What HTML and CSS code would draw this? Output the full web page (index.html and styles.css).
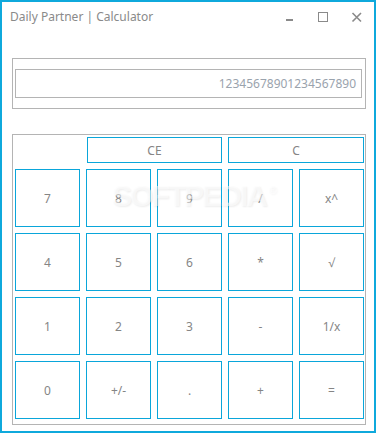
FILE: index.html
```html
<!DOCTYPE html>
<html>
<head>
<meta charset="utf-8">
<link rel="stylesheet" href="styles.css">
</head>
<body>
<div class="window">
  <div class="titlebar">
    <span class="title">Daily Partner | Calculator</span>
    <div class="controls">
      <svg class="ctl" width="12" height="12" viewBox="0 0 12 12"><rect x="3" y="8" width="7" height="2" fill="#8a8a8a"/></svg>
      <svg class="ctl" width="12" height="12" viewBox="0 0 12 12"><rect x="1.5" y="1.5" width="9" height="9" fill="none" stroke="#8a8a8a" stroke-width="1"/></svg>
      <svg class="ctl" width="12" height="12" viewBox="0 0 12 12"><path d="M1.5 2 L10 10.5 M10 2 L1.5 10.5" stroke="#8a8a8a" stroke-width="1.6"/></svg>
    </div>
  </div>
  <div class="display-group">
    <div class="display">12345678901234567890</div>
  </div>
  <div class="keypad">
    <button class="key wide ce">CE</button>
    <button class="key wide">C</button>
    <button class="key">7</button>
    <button class="key">8</button>
    <button class="key">9</button>
    <button class="key">/</button>
    <button class="key">x^</button>
    <button class="key">4</button>
    <button class="key">5</button>
    <button class="key">6</button>
    <button class="key">*</button>
    <button class="key">√</button>
    <button class="key">1</button>
    <button class="key">2</button>
    <button class="key">3</button>
    <button class="key">-</button>
    <button class="key">1/x</button>
    <button class="key">0</button>
    <button class="key">+/-</button>
    <button class="key">.</button>
    <button class="key">+</button>
    <button class="key">=</button>
    <div class="watermark">SOFTPEDIA<sup>®</sup></div>
  </div>
</div>
</body>
</html>
```
FILE: styles.css
```css
html, body {
  margin: 0;
  padding: 0;
  background: #ffffff;
}
.window {
  box-sizing: border-box;
  width: 376px;
  height: 433px;
  border: 2px solid #0fa9dc;
  background: #ffffff;
  font-family: "Noto Sans", "Open Sans", sans-serif;
  padding: 0 0 0 10px;
}
.titlebar {
  display: flex;
  align-items: center;
  justify-content: space-between;
  height: 28px;
}
.title {
  font-size: 12px;
  color: #8a8a8a;
  margin-left: -2px;
}
.controls {
  display: flex;
  gap: 22px;
  margin-right: 11px;
  margin-top: 2px;
}
.ctl {
  display: block;
}
.display-group {
  box-sizing: border-box;
  width: 354px;
  margin-top: 28px;
  border: 1px solid #b4b4b4;
  padding: 10px 3px 10px 2px;
}
.display {
  box-sizing: border-box;
  height: 29px;
  border: 1px solid #b4b4b4;
  text-align: right;
  font-size: 12px;
  color: #9aa3ad;
  line-height: 27px;
  padding-right: 5px;
}
.keypad {
  position: relative;
  box-sizing: border-box;
  width: 354px;
  margin-top: 25px;
  border: 1px solid #b4b4b4;
  padding: 2px 3px 5px 2px;
  display: grid;
  grid-template-columns: repeat(5, 65px);
  grid-template-rows: 26px repeat(4, 58px);
  column-gap: 6px;
  row-gap: 6px;
}
.key {
  box-sizing: border-box;
  margin: 0;
  padding: 0;
  border: 1px solid #0aa6da;
  background: #ffffff;
  font-family: "Noto Sans", "Open Sans", sans-serif;
  font-size: 12px;
  color: #858585;
}
.wide {
  grid-column: span 2;
}
.ce {
  grid-column: 2 / span 2;
  margin-left: 1px;
}
.watermark {
  position: absolute;
  left: 99px;
  top: 44px;
  font-family: "Liberation Sans", sans-serif;
  font-weight: bold;
  font-size: 30px;
  line-height: 34px;
  letter-spacing: -2px;
  color: rgba(255,255,255,0.55);
  text-shadow: 1px 1px 2px rgba(0,0,0,0.07);
  pointer-events: none;
}
.watermark sup {
  font-size: 11px;
  font-weight: normal;
  vertical-align: top;
  position: relative;
  top: -6px;
  margin-left: 3px;
}
```
